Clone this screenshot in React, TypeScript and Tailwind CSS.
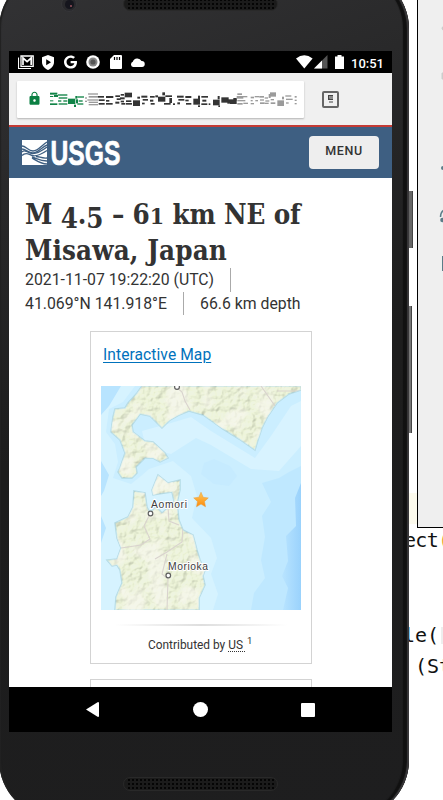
import React from "react";
import { FaGoogle } from "react-icons/fa";
import { MdLock } from "react-icons/md";

type Rect = [number, number, number, number];

const GREEN: Rect[] = [
  [150, 280, 22, 6], [150, 290, 10, 3], [162, 287, 12, 6], [150, 303, 10, 3], [150, 312, 22, 5],
  [174, 285, 28, 4], [176, 294, 26, 4], [174, 303, 10, 4], [190, 303, 12, 4], [176, 312, 26, 4],
  [204, 298, 22, 16], [222, 316, 6, 7], [226, 290, 6, 8], [228, 300, 6, 12],
  [232, 291, 20, 4], [236, 303, 12, 4], [232, 312, 18, 4],
];
const GRAY: Rect[] = [
  [255, 294, 6, 4], [255, 304, 6, 4], [264, 282, 30, 4], [266, 290, 28, 5], [262, 300, 32, 4],
  [266, 307, 28, 4], [266, 314, 28, 4],
  [712, 282, 14, 5], [710, 290, 20, 8], [712, 302, 24, 4], [712, 311, 16, 5], [728, 290, 14, 4], [730, 310, 14, 4],
  [752, 292, 10, 5], [752, 302, 6, 4], [752, 311, 10, 4], [764, 290, 14, 4], [766, 302, 8, 4],
  [778, 290, 14, 5], [780, 300, 12, 4], [780, 309, 14, 5], [794, 294, 10, 4], [796, 303, 12, 4], [794, 310, 12, 4],
  [806, 284, 6, 12], [810, 279, 18, 13], [812, 299, 10, 4], [812, 309, 14, 5],
  [832, 303, 20, 17], [846, 292, 6, 8], [856, 288, 18, 4], [858, 298, 20, 4], [858, 309, 8, 4],
  [884, 290, 6, 5], [884, 301, 6, 4], [884, 311, 6, 4],
];
const DARK: Rect[] = [
  [294, 290, 18, 5], [296, 300, 18, 5], [296, 311, 18, 5], [318, 290, 22, 6], [318, 302, 10, 5], [318, 311, 20, 5],
  [346, 288, 14, 5], [350, 297, 12, 5], [346, 307, 12, 6], [362, 284, 10, 5], [360, 294, 14, 6], [362, 304, 10, 5], [364, 311, 12, 5],
  [374, 280, 22, 14], [378, 303, 16, 5], [378, 311, 18, 5],
  [399, 303, 21, 17], [412, 292, 8, 6], [424, 289, 18, 6], [428, 299, 16, 5], [426, 310, 8, 5],
  [450, 290, 14, 5], [450, 301, 10, 6], [452, 311, 12, 5], [466, 288, 8, 6], [474, 292, 22, 15], [487, 279, 8, 9],
  [496, 288, 20, 5], [508, 296, 8, 15], [492, 311, 20, 5], [519, 312, 6, 5],
  [531, 289, 20, 6], [535, 299, 18, 5], [532, 309, 8, 6], [556, 290, 18, 6], [556, 301, 10, 5], [558, 311, 16, 5],
  [580, 298, 20, 18], [594, 289, 6, 10], [594, 318, 6, 5], [604, 290, 20, 5], [607, 301, 12, 6], [604, 312, 18, 5],
  [626, 312, 5, 5], [639, 301, 20, 17], [653, 290, 6, 10], [655, 318, 5, 5],
  [664, 294, 22, 16], [682, 300, 8, 13], [690, 300, 20, 14], [700, 296, 10, 8],
];

function Censored() {
  const draw = (list: Rect[], fill: string) =>
    list.map(([x, y, w, h], i) => <rect key={fill + i} x={x} y={y} width={w} height={h} fill={fill} />);
  return (
    <svg width="248" height="16" viewBox="150 278 744 48" className="shrink-0">
      {draw(GREEN, "#118447")}
      {draw(GRAY, "#9b9b9b")}
      {draw(DARK, "#343434")}
    </svg>
  );
}

function StatusBar() {
  return (
    <div className="flex h-[22px] shrink-0 items-center bg-black pl-[9px] pr-[7px] text-white">
      <svg width="16" height="14" viewBox="0 0 16 14" fill="none" className="mr-[8px]">
        <path d="M.5 2.5V13.5H13" stroke="#fff" strokeWidth="1.1" />
        <path d="M3 1h12.2v10.3H3z" stroke="#fff" strokeWidth="1.3" />
        <path d="M5 10V3l4.1 3.6L13.2 3v7" stroke="#fff" strokeWidth="1.7" />
      </svg>
      <svg width="12" height="15" viewBox="0 0 12 15" className="mr-[10px]">
        <path d="M6 0 12 2.2V7c0 4-3 6.8-6 8-3-1.200-6-4-6-8V2.200z" fill="#fff" />
        <path d="M4.200 4.300v6L9 7.300z" fill="#000" />
      </svg>
      <FaGoogle className="mr-[9px] h-[14px] w-[13px]" />
      <svg width="14" height="14" viewBox="0 0 14 14" className="mr-[10px]">
        <circle cx="7" cy="7" r="6.800" fill="#fff" />
        <circle cx="7" cy="7" r="4.500" fill="#888" />
        <circle cx="7" cy="7" r="2.600" fill="#555" />
      </svg>
      <svg width="12" height="14" viewBox="0 0 12 14" className="mr-[8px]">
        <path d="M4 0h7q1 0 1 1v12q0 1-1 1H1q-1 0-1-1V4z" fill="#fff" />
        <path d="M4.500 2v3M7 2v3M9.500 2v3" stroke="#000" strokeWidth="1.200" />
      </svg>
      <svg width="15" height="9" viewBox="0 0 15 9">
        <path d="M3 9a2.800 2.800 0 0 1-.2-5.300A4.700 4.700 0 0 1 11.500 3 3 3 0 0 1 12 9z" fill="#fff" />
      </svg>
      <div className="ml-auto flex items-center">
        <svg width="17" height="14" viewBox="0 0 17 14" className="mr-[1px]">
          <path d="M0 3.500Q8.300-3 16.600 3.500L8.300 13.600z" fill="#fff" />
        </svg>
        <svg width="14" height="14" viewBox="0 0 14 14" className="mr-[7px]">
          <path d="M0 13.500 13.500 0v13.500z" fill="#555" />
          <path d="M0 13.500 8 5.500v8z" fill="#fff" />
        </svg>
        <svg width="9" height="14" viewBox="0 0 9 14" className="mr-[7px]">
          <path d="M2.500 0h4v1.500H9V14H0V1.500h2.500z" fill="#fff" />
        </svg>
        <span className="w-[34px] translate-y-[1px] whitespace-nowrap text-[13px] font-medium leading-none">10:51</span>
      </div>
    </div>
  );
}

function AddressBar() {
  return (
    <div className="flex h-[52px] shrink-0 items-center bg-[#f0f0f0] pl-[8px] pt-[1px]">
      <div className="flex h-[37px] w-[287px] items-center rounded-[1px] bg-white pl-[10px] shadow-[0_1px_2px_rgba(0,0,0,0.25)]">
        <MdLock className="-mt-[2px] mr-[8px] h-[15px] w-[15px] shrink-0 text-[#0b8043]" />
        <Censored />
      </div>
      <div className="ml-[18px] flex h-[17px] w-[17px] items-center justify-center rounded-[2px] border-2 border-[#666]">
        <svg width="6" height="8" viewBox="0 0 6 8" className="-mt-px">
          <path d="M0 0h5v1H1.500v2.500H5V5H0zM1 6.500h4v1H1z" fill="#444" />
          <path d="M1.500 1H5v2.500H1.500z" fill="#888" />
        </svg>
      </div>
    </div>
  );
}

function SiteHeader() {
  return (
    <header className="flex h-[53px] shrink-0 items-center border-t-2 border-[#c43b35] bg-[#3e5f82] pl-[13px] pr-[12px]">
      <svg width="104" height="44" viewBox="0 -9 104 44" className="shrink-0 overflow-visible">
        <path d="M0 0h25v25H0z" fill="#fff" />
        <g stroke="#3e5f82" fill="none" strokeWidth="1.350">
          <path d="M0 6c4 0 6 5 11 5s9-6 14-9" />
          <path d="M0 9c4 0 6 4 11 4s9-6 14-8" />
          <path d="M0 12c2-2 4-1 8 1s9 0 17-6" />
          <path d="M0 15.500c4-4 7-1 10 0s9-1 15-5" />
          <path d="M10 17c6 2 8 4 15 4M14 16.500c4 0 5 2 11 1.500M10 18c5 3 9 6 15 6" />
        </g>
        <text x="28.500" y="25" fontFamily="Liberation Sans Narrow, Liberation Sans, Arial, sans-serif" fontWeight="700" fontSize="35.500" textLength="70" lengthAdjust="spacingAndGlyphs" fill="#fff" stroke="#fff" strokeWidth="0.700">USGS</text>
      </svg>
      <button className="ml-auto mr-px h-[33px] w-[70px] rounded-[4px] bg-[#eee] pb-[2px] text-[12.500px] font-medium tracking-[0.600px] text-[#333]">MENU</button>
    </header>
  );
}

const HOKKAIDO =
  "M41 0 36 7 27 17 24 22 14 23 12 31 10 46 19 54 24 67 19 82 17 86 21 92 31 92 36 87 35 81 44 72 52 72 59 76 67 72 64 67 52 56 44 55 32 46 31 39 39 28 49 30 61 42 69 34 78 29 88 25 102 29 112 36 122 43 138 53 154 64 157 54 161 42 167 30 176 17 188 8 200 4V0z";
const HONSHU =
  "M33 105 44 107 46 121 49 127 55 121 61 127 68 121 73 115 71 106 64 107 52 109 51 104 57 89 67 97 79 94 79 104 76 117 78 134 82 144 92 149 96 164 99 174 104 184 102 190 104 199 98 212 98 224H14L15 211 21 197 19 184 16 179 11 180 6 174 16 173 20 162 16 152 14 137 27 131 32 121z";

function QuakeMap() {
  const city = "Liberation Sans, Arial, sans-serif";
  return (
    <svg width="200" height="224" viewBox="0 0 200 224" className="block shrink-0">
      <defs>
        <clipPath id="land"><path d={HOKKAIDO} /><path d={HONSHU} /></clipPath>
        <linearGradient id="deep" x1="0" x2="1">
          <stop offset="0" stopColor="#b9e4ff" /><stop offset="1" stopColor="#9ad2fc" />
        </linearGradient>
        <linearGradient id="star" x1="0" y1="0" x2="0" y2="1">
          <stop offset="0" stopColor="#ffc95a" /><stop offset="1" stopColor="#fb8a0c" />
        </linearGradient>
        <filter id="relief" x="0" y="0" width="100%" height="100%" colorInterpolationFilters="sRGB">
          <feTurbulence type="fractalNoise" baseFrequency="0.130" numOctaves="3" seed="8" />
          <feDiffuseLighting surfaceScale="2" lightingColor="#fcffe8" diffuseConstant="1.180">
            <feDistantLight azimuth="225" elevation="58" />
          </feDiffuseLighting>
        </filter>
        <filter id="patches" x="0" y="0" width="100%" height="100%" colorInterpolationFilters="sRGB">
          <feTurbulence type="fractalNoise" baseFrequency="0.045" numOctaves="2" seed="4" />
          <feColorMatrix values="0 0 0 0 0.98  0 0 0 0 0.97  0 0 0 0 0.95  5 0 0 0 -2.3" />
        </filter>
      </defs>
      <path d="M0 0h200v224H0z" fill="#cbeeff" />
      <path d="M0 0h34L22 16 8 23 5 46 14 58 17 76 12 92 30 98 40 90 48 83 72 75 90 90 96 110 91 132 110 152 116 172 110 188 117 208 112 224H0z" fill="#d6f3ff" />
      <path d="M41 45 70 37 90 31 110 45 154 72 170 50 190 20 200 15V60L178 85 150 83 110 59 95 52 70 68 45 62z" fill="#d8f3ff" />
      <path d="M0 0h20L8 20 0 29zM0 75l8 14-5 16-3 5zM0 130l5 12-5 15z" fill="#b8e4ff" />
      <path d="M100 88 103 77 113 73 129 80 136 90 128 100 113 98z" fill="#c6ebff" />
      <path d="M161 97 178 92 188 86 200 80V224H150L153 207 164 192 160 174 164 151 161 130 170 116z" fill="#bfe8ff" />
      <path d="M200 97 194 112 195 140 185 150 187 175 181 190 187 202 182 224H200z" fill="url(#deep)" />
      <path d={HOKKAIDO} fill="#e6efd0" stroke="#b4dbe5" strokeWidth="1.500" />
      <path d={HONSHU} fill="#e6efd0" stroke="#b4dbe5" strokeWidth="1.500" />
      <g clipPath="url(#land)">
        <rect width="200" height="224" filter="url(#relief)" opacity="0.340" />
        <rect width="200" height="224" filter="url(#patches)" opacity="0.550" />
        <path d="M74 0 81 6 84 15 89 24M160 0l7 10 7 10M176 5h24M20 162l20-3 9-6-6-13 5-10M67 121l1 14 10 4M82 140l-1 16-15 10-12 7M66 168l-5 20 6 5-1 31" fill="none" stroke="#d9d3ce" strokeWidth="1.100" />
      </g>
      <g fill="#fff" stroke="#606060" strokeWidth="1.200">
        <circle cx="76" cy="1" r="2.400" /><circle cx="49.500" cy="127.500" r="2.300" /><circle cx="67.300" cy="189.500" r="2.300" />
      </g>
      <g fontFamily={city} fontSize="10.300" fill="#3c3c3c" stroke="#fff" strokeWidth="1.800" paintOrder="stroke">
        <text x="50" y="122" textLength="36">Aomori</text>
        <text x="67" y="184" textLength="40">Morioka</text>
      </g>
      <path d="M100 106.200 102.200 111.300 107.300 111.900 103.500 115.500 104.500 120.800 100 118.100 95.500 120.800 96.500 115.500 92.700 111.900 97.800 111.300z" fill="url(#star)" stroke="#e89a38" strokeWidth="0.500" />
    </svg>
  );
}

function Page() {
  return (
    <main className="flex min-h-0 flex-1 flex-col overflow-hidden bg-white text-[#333]">
      <h1 className="ml-[16px] mt-[18px] h-[72px] shrink-0 whitespace-nowrap font-['DejaVu_Serif_Condensed','DejaVu_Serif',serif] text-[27.500px] font-bold leading-[36px] [font-stretch:condensed]">
        <span className="block h-[36px] tracking-[-0.130px]">
          M <span className="relative top-[4px]">4</span>.<span className="relative top-[4px]">5</span> – 6<span className="text-[23px] leading-none">1</span> km NE of
        </span>
        <span className="block h-[36px] tracking-[0.120px]">Misawa, Japan</span>
      </h1>
      <div className="ml-[16px] flex shrink-0 flex-col whitespace-nowrap text-[15.800px] leading-[23.500px]">
        <div className="flex">
          <span className="w-[206px] border-r border-[#aaa]">2021-11-07 19:22:20 (UTC)</span>
        </div>
        <div className="flex">
          <span className="mr-[16px] w-[159px] border-r border-[#aaa]">41.069°N 141.918°E</span>
          <span>66.6 km depth</span>
        </div>
      </div>
      <section className="ml-[81px] mt-[16px] flex h-[333px] w-[222px] shrink-0 flex-col border border-[#d3d3d3] pl-[10px]">
        <a className="ml-[2px] mt-[12px] h-[42px] text-[15.600px] leading-[23px] tracking-[0.070px] text-[#0072bc] underline underline-offset-2">Interactive Map</a>
        <QuakeMap />
        <div className="ml-[14px] mt-[14px] h-[2px] w-[172px] shrink-0 bg-gradient-to-r from-white via-[#dedede] to-white" />
        <p className="ml-[47px] mt-[10px] whitespace-nowrap text-[11.900px] leading-[18px]">
          Contributed by <span className="underline decoration-dotted underline-offset-[2px]">US&nbsp;</span><sup className="-top-[5px] ml-px text-[9.500px]">1</sup>
        </p>
      </section>
      <section className="ml-[81px] mt-[15px] h-[30px] w-[222px] shrink-0 border border-[#d3d3d3]" />
    </main>
  );
}

function NavBar() {
  return (
    <nav className="flex h-[45px] shrink-0 items-center bg-black pl-[77px]">
      <svg width="13" height="15" viewBox="0 0 13 15"><path d="M0 7.500 12 0q1 0 1 1v13q0 1-1 1z" fill="#fff" /></svg>
      <div className="ml-[94px] h-[15px] w-[15px] rounded-full bg-white" />
      <div className="ml-[93px] h-[14px] w-[14px] rounded-[1px] bg-white" />
    </nav>
  );
}

function EditorBehind() {
  return (
    <div className="absolute inset-0 font-['DejaVu_Sans_Mono','Liberation_Mono',monospace] text-[20px] text-[#111]">
      <div className="absolute left-[400px] top-[493px] h-[31px] w-[43px] bg-[#fcfaed]" />
      <pre className="absolute left-[404px] top-[528px] font-[inherit] leading-[24px] tracking-[-0.700px]">ect<span className="text-[#e8a53b]">(</span></pre>
      <pre className="absolute left-[403px] top-[623px] font-[inherit] leading-[24px]">le(</pre>
      <div className="absolute left-[441px] top-[627px] h-[17px] w-[2px] bg-[#eee]" />
      <pre className="absolute left-[415px] top-[654px] font-[inherit] leading-[24px]">(St</pre>
    </div>
  );
}

function EmulatorTools() {
  return (
    <div className="absolute -top-px left-[417px] h-[529px] w-[60px] border border-black bg-[#efefef]">
      <svg width="26" height="527" viewBox="418 0 26 527">
        <path d="M444 26q-4 2 0 5M442 73h2v6h-2z" fill="#ccc" stroke="#ccc" />
        <circle cx="443" cy="168" r="2" fill="#5b7c88" />
        <path d="M440.500 217q0-5 3.500-7" stroke="#5b7c88" strokeWidth="1.500" fill="none" />
        <circle cx="442.500" cy="220" r="2.300" fill="#5b7c88" />
        <path d="M442 256h3v15h-3z" fill="#5b7c88" />
      </svg>
    </div>
  );
}

function Speaker({ place }: { place: string }) {
  return (
    <div className={"absolute left-[123px] w-[155px] overflow-hidden rounded-full border border-[#292929] bg-[#1b1b1b] " + place}>
      <div className="mx-[3px] h-full bg-[radial-gradient(circle,#050505_1px,transparent_1.400px)] bg-[size:4px_4px]" />
    </div>
  );
}

export default function App() {
  return (
    <div className="relative h-[800px] w-[443px] overflow-hidden bg-white font-['Roboto',sans-serif]">
      <EditorBehind />
      <EmulatorTools />
      <div className="absolute left-[408px] top-[191px] h-[57px] w-[5px] border-r border-[#444] bg-[#666]" />
      <div className="absolute left-[408px] top-[306px] h-[127px] w-[4px] border-r border-[#444] bg-[#777]" />
      <div className="absolute -left-px -top-[29px] h-[847px] w-[410px] rounded-[58px] bg-[linear-gradient(160deg,#333335_0%,#29292a_22%,#1d1d1d_50%,#1e1e1f_100%)] shadow-[inset_-2px_0_1px_#3a393b,inset_-6px_0_1px_#111,inset_2px_0_1px_#222]">
        <div className="absolute left-[62px] top-[25px] flex h-[16px] w-[16px] items-center justify-center rounded-full border border-[#353538] bg-[#29292c]">
          <div className="flex h-[9px] w-[9px] items-center justify-center rounded-full bg-[#15151d]">
            <span className="ml-[4px] mt-[3px] h-[2px] w-[2px] bg-[#77434d]" />
          </div>
        </div>
      </div>
      <Speaker place="-top-[3px] h-[14px]" />
      <div className="absolute left-[9px] top-[51px] flex h-[681px] w-[383px] flex-col overflow-hidden">
        <StatusBar />
        <AddressBar />
        <SiteHeader />
        <Page />
        <NavBar />
      </div>
      <Speaker place="top-[777px] h-[14px]" />
    </div>
  );
}
